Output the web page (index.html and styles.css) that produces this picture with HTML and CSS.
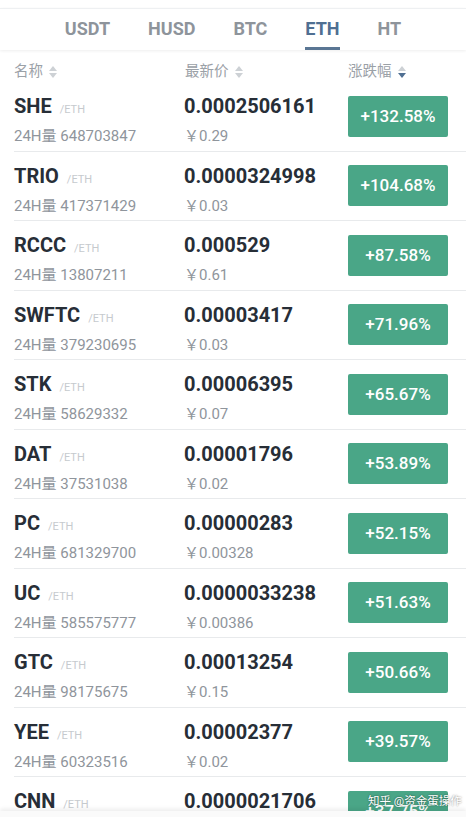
FILE: index.html
```html
<!DOCTYPE html>
<html lang="zh-CN">
    <head>
        <meta charset="UTF-8">
        <meta name="viewport" content="width=device-width, initial-scale=1.0">
        <title>行情 - ETH</title>

        <!-- styling untuk halaman -->
        <link rel="stylesheet" href="styles.css">
    </head>
    <body>
        <div class="page">
            <nav class="tabs">
                <a class="tab">USDT</a>
                <a class="tab">HUSD</a>
                <a class="tab">BTC</a>
                <a class="tab active">ETH</a>
                <a class="tab">HT</a>
            </nav>

            <div class="head">
                <span class="sort">名称 <i class="arrows"><b class="up"></b><b class="down"></b></i></span>
                <span class="sort">最新价 <i class="arrows"><b class="up"></b><b class="down"></b></i></span>
                <span class="sort">涨跌幅 <i class="arrows on"><b class="up"></b><b class="down"></b></i></span>
            </div>

            <div class="list">
                <div class="row">
                    <div class="name"><strong>SHE</strong><small>/ETH</small><p>24H量 648703847</p></div>
                    <div class="price"><strong>0.0002506161</strong><p>￥0.29</p></div>
                    <div class="change">+132.58%</div>
                </div>
                <div class="row">
                    <div class="name"><strong>TRIO</strong><small>/ETH</small><p>24H量 417371429</p></div>
                    <div class="price"><strong>0.0000324998</strong><p>￥0.03</p></div>
                    <div class="change">+104.68%</div>
                </div>
                <div class="row">
                    <div class="name"><strong>RCCC</strong><small>/ETH</small><p>24H量 13807211</p></div>
                    <div class="price"><strong>0.000529</strong><p>￥0.61</p></div>
                    <div class="change">+87.58%</div>
                </div>
                <div class="row">
                    <div class="name"><strong>SWFTC</strong><small>/ETH</small><p>24H量 379230695</p></div>
                    <div class="price"><strong>0.00003417</strong><p>￥0.03</p></div>
                    <div class="change">+71.96%</div>
                </div>
                <div class="row">
                    <div class="name"><strong>STK</strong><small>/ETH</small><p>24H量 58629332</p></div>
                    <div class="price"><strong>0.00006395</strong><p>￥0.07</p></div>
                    <div class="change">+65.67%</div>
                </div>
                <div class="row">
                    <div class="name"><strong>DAT</strong><small>/ETH</small><p>24H量 37531038</p></div>
                    <div class="price"><strong>0.00001796</strong><p>￥0.02</p></div>
                    <div class="change">+53.89%</div>
                </div>
                <div class="row">
                    <div class="name"><strong>PC</strong><small>/ETH</small><p>24H量 681329700</p></div>
                    <div class="price"><strong>0.00000283</strong><p>￥0.00328</p></div>
                    <div class="change">+52.15%</div>
                </div>
                <div class="row">
                    <div class="name"><strong>UC</strong><small>/ETH</small><p>24H量 585575777</p></div>
                    <div class="price"><strong>0.0000033238</strong><p>￥0.00386</p></div>
                    <div class="change">+51.63%</div>
                </div>
                <div class="row">
                    <div class="name"><strong>GTC</strong><small>/ETH</small><p>24H量 98175675</p></div>
                    <div class="price"><strong>0.00013254</strong><p>￥0.15</p></div>
                    <div class="change">+50.66%</div>
                </div>
                <div class="row">
                    <div class="name"><strong>YEE</strong><small>/ETH</small><p>24H量 60323516</p></div>
                    <div class="price"><strong>0.00002377</strong><p>￥0.02</p></div>
                    <div class="change">+39.57%</div>
                </div>
                <div class="row">
                    <div class="name"><strong>CNN</strong><small>/ETH</small><p>24H量 27436215</p></div>
                    <div class="price"><strong>0.0000021706</strong><p>￥0.00251</p></div>
                    <div class="change">+37.75%</div>
                </div>
            </div>

            <footer class="bottom"></footer>
            <span class="mark">知乎 @资金蛋操作</span>
        </div>
    </body>
</html>
```

FILE: styles.css
```css
body {
    margin: 0;
    padding: 0;
    background-color: #ffffff;
    font-family: Roboto, "Noto Sans CJK SC", sans-serif;
    color: #272e37;
}

.page {
    position: relative;
    height: 817px;
    display: flex;
    flex-direction: column;
    overflow: hidden;
}

/* tab atas */
.tabs {
    margin-top: 8px;
    border-top: 1px solid #eef0f2;
    display: flex;
    justify-content: center;
    gap: 38px;
    background-color: #fff;
    box-shadow: 0 1px 3px rgba(0, 0, 0, 0.07);
    position: relative;
    z-index: 1;
}

.tab {
    padding-top: 10px;
    padding-bottom: 8px;
    line-height: 20px;
    font-size: 18px;
    font-weight: 700;
    color: #8e949b;
    border-bottom: 3px solid transparent;
}

.tab.active {
    color: #4f6f92;
    border-bottom-color: #5a7694;
}

/* header kolom */
.head {
    display: grid;
    grid-template-columns: 171px 163px auto;
    padding: 11px 0 0 14px;
    height: 21px;
    font-size: 14.5px;
    line-height: 20px;
    color: #9ba1a7;
}

.sort {
    display: flex;
    align-items: center;
    gap: 6px;
}

.arrows {
    display: flex;
    flex-direction: column;
    gap: 2px;
}

.arrows b {
    width: 0;
    height: 0;
    border-left: 4px solid transparent;
    border-right: 4px solid transparent;
}

.arrows .up {
    border-bottom: 5px solid #cdd1d5;
}

.arrows .down {
    border-top: 5px solid #cdd1d5;
}

.arrows.on .down {
    border-top-color: #4f6f92;
}

/* daftar koin */
.list {
    flex: 1;
    overflow: hidden;
}

.row {
    margin-left: 14px;
    height: 69.5px;
    box-sizing: border-box;
    border-bottom: 1px solid #e8eaec;
    display: grid;
    grid-template-columns: 170px 164px 100px;
    align-items: start;
}

.name,
.price {
    padding-top: 12px;
}

.row strong {
    font-size: 20px;
    line-height: 24px;
    font-weight: 700;
    color: #272e37;
}

.row small {
    margin-left: 8px;
    font-size: 11px;
    color: #c6cace;
}

.row p {
    margin: 8px 0 0;
    font-size: 15px;
    line-height: 20px;
    color: #8f959c;
}

.change {
    align-self: center;
    height: 41px;
    line-height: 41px;
    text-align: center;
    border-radius: 2px;
    background-color: #4aa687;
    color: #ffffff;
    font-size: 17px;
    font-weight: 500;
}

.bottom {
    height: 6px;
    background-color: #fafafa;
    box-shadow: 0 -2px 4px rgba(0, 0, 0, 0.08);
    position: relative;
}

.mark {
    position: absolute;
    left: 368px;
    top: 792px;
    font-size: 11.5px;
    color: #ffffff;
    text-shadow: 0 0 2px rgba(0, 0, 0, 0.6);
}
```
